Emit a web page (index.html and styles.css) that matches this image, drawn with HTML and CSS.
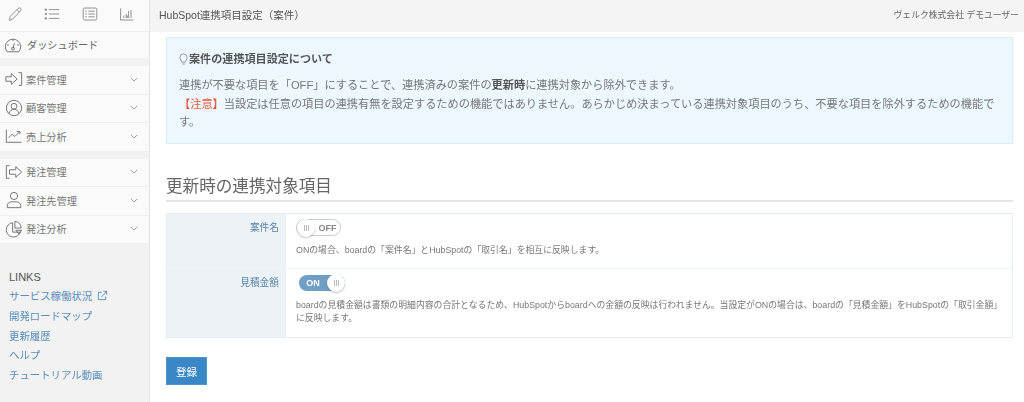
FILE: index.html
```html
<!DOCTYPE html>
<html lang="ja">
<head>
<meta charset="utf-8">
<title>HubSpot連携項目設定（案件）</title>
<link rel="stylesheet" href="styles.css">
</head>
<body>
<div class="app">
  <aside class="sidebar">
    <div class="tools">
      <svg class="tool" viewBox="0 0 20 20"><path d="M3 18l1-5L14 3a1.800 1.800 0 0 1 3 3L7 16.500z M12.500 4.500l3 3"/></svg>
      <svg class="tool" viewBox="0 0 20 20"><path d="M6 4.500h13M6 10h13M6 15.500h13"/><path class="dots" d="M1 4.500h2.500M1 10h2.500M1 15.500h2.500"/></svg>
      <svg class="tool" viewBox="0 0 20 20"><rect x="1.500" y="2.500" width="17" height="15" rx="2"/><path d="M8 6.500h8M8 10h8M8 13.500h8M4 6.500h2M4 10h2M4 13.500h2"/></svg>
      <svg class="tool" viewBox="0 0 20 20"><path d="M2 3v14.500h16M6 15v-3M9 15v-5M12 15V6M15 15V5M10.500 15v-3"/></svg>
    </div>
    <a class="dash">
      <svg class="ico ico-dash" viewBox="0 0 20 20"><path d="M3.500 17.500a8.500 8.500 0 1 1 13 0z"/><path d="M10 14l1.500-6M10 3.500v2M3.500 10h2M16.500 10h-2"/><circle cx="10" cy="14" r="1.700"/></svg>
      <span>ダッシュボード</span>
    </a>
    <ul class="group">
      <li class="nav"><svg class="ico" viewBox="0 0 20 20"><path d="M1 7.500h6V4l6.500 6L7 16v-3.500H1z"/><path d="M15 3h3.500v14H15"/></svg><span>案件管理</span><svg class="chev" viewBox="0 0 10 6"><path d="M1 1l4 4 4-4"/></svg></li>
      <li class="nav"><svg class="ico" viewBox="0 0 20 20"><circle cx="10" cy="10" r="8.500"/><circle cx="10" cy="8" r="3.200"/><path d="M4.500 16c1-3.500 3-4.500 5.500-4.500s4.500 1 5.500 4.500"/></svg><span>顧客管理</span><svg class="chev" viewBox="0 0 10 6"><path d="M1 1l4 4 4-4"/></svg></li>
      <li class="nav"><svg class="ico" viewBox="0 0 20 20"><path d="M1.500 3v14h17"/><path d="M4 12l4-4 3 2.500 5-5M13 5h3.500v3"/></svg><span>売上分析</span><svg class="chev" viewBox="0 0 10 6"><path d="M1 1l4 4 4-4"/></svg></li>
    </ul>
    <ul class="group group-b">
      <li class="nav"><svg class="ico" viewBox="0 0 20 20"><path d="M5 3H1.500v14H5"/><path d="M5 7.500h7V4l6.500 6-6.500 6v-3.500H5z"/></svg><span>発注管理</span><svg class="chev" viewBox="0 0 10 6"><path d="M1 1l4 4 4-4"/></svg></li>
      <li class="nav"><svg class="ico" viewBox="0 0 20 20"><circle cx="10" cy="5.500" r="4"/><path d="M2.500 18.500v-2c0-3 2.500-4.500 5-4.500h5c2.500 0 5 1.500 5 4.500v2z"/></svg><span>発注先管理</span><svg class="chev" viewBox="0 0 10 6"><path d="M1 1l4 4 4-4"/></svg></li>
      <li class="nav"><svg class="ico" viewBox="0 0 20 20"><path d="M8.500 3a8 8 0 1 0 8.500 10.500H8.500z"/><path d="M11 1.500a7.500 7.500 0 0 1 7 7.500h-7z"/><path d="M12 11.500h6.500l-3 4z"/></svg><span>発注分析</span><svg class="chev" viewBox="0 0 10 6"><path d="M1 1l4 4 4-4"/></svg></li>
    </ul>
    <div class="links">
      <div class="links-title">LINKS</div>
      <a>サービス稼働状況<svg class="ext" viewBox="0 0 12 12"><path d="M9.500 7v3.500h-8v-8H5"/><path d="M5 7.500L10.500 1.500M7 1.500h3.500V5"/></svg></a>
      <a>開発ロードマップ</a>
      <a>更新履歴</a>
      <a>ヘルプ</a>
      <a>チュートリアル動画</a>
    </div>
  </aside>
  <div class="main">
    <header class="topbar">
      <div class="page-title">HubSpot連携項目設定（案件）</div>
      <div class="user">ヴェルク株式会社 デモユーザー</div>
    </header>
    <main class="content">
      <section class="notice">
        <h3 class="notice-title"><svg class="bulb" viewBox="0 0 10 14"><path d="M3.200 10C3 8 1 7.500 1 4.800a4 4 0 0 1 8 0C9 7.500 7 8 6.800 10zM3.500 12h3"/></svg>案件の連携項目設定について</h3>
        <p>連携が不要な項目を「OFF」にすることで、連携済みの案件の<b>更新時</b>に連携対象から除外できます。</p>
        <p><span class="warn">【注意】</span>当設定は任意の項目の連携有無を設定するための機能ではありません。あらかじめ決まっている連携対象項目のうち、不要な項目を除外するための機能です。</p>
      </section>
      <h2 class="section-title">更新時の連携対象項目</h2>
      <div class="form-table">
        <div class="row row-one">
          <div class="label">案件名</div>
          <div class="field">
            <div class="switch off"><span class="knob"></span><span class="state">OFF</span></div>
            <p class="help">ONの場合、boardの「案件名」とHubSpotの「取引名」を相互に反映します。</p>
          </div>
        </div>
        <div class="row">
          <div class="label">見積金額</div>
          <div class="field">
            <div class="switch on"><span class="state">ON</span><span class="knob"></span></div>
            <p class="help">boardの見積金額は書類の明細内容の合計となるため、HubSpotからboardへの金額の反映は行われません。当設定がONの場合は、boardの「見積金額」をHubSpotの「取引金額」に反映します。</p>
          </div>
        </div>
      </div>
      <button class="submit">登録</button>
    </main>
  </div>
</div>
</body>
</html>
```

FILE: styles.css
```css
* { box-sizing: border-box; }
html, body { margin: 0; padding: 0; height: 100%; overflow: hidden; }
body {
  font-family: "Liberation Sans", "Noto Sans CJK JP", sans-serif;
  color: #555;
  background: #fff;
}
.app { display: flex; width: 1024px; height: 402px; filter: blur(.35px); }

.sidebar {
  width: 150px;
  flex: none;
  background: #f2f2f2;
  border-right: 1px solid #e4e4e4;
}
.tools {
  height: 32px;
  display: flex;
  align-items: center;
  justify-content: space-between;
  padding: 0 14px 4px 7px;
  background: #fafafa;
  border-bottom: 1px solid #eee;
}
.tool { width: 16px; height: 16px; fill: none; stroke: #777; stroke-width: 1; }
.tool .dots { stroke-width: 2; }
.dash {
  height: 26px;
  display: flex;
  align-items: center;
  gap: 5px;
  padding: 0 0 1px 4px;
  background: #fafafa;
  font-size: 10.200px;
  color: #666;
}
.ico { width: 18px; height: 18px; flex: none; fill: none; stroke: #777; stroke-width: 1.100; }
.group { list-style: none; margin: 8px 0 0; padding: 0; }
.group-b { margin-top: 7px; }
.nav {
  height: 28.500px;
  display: flex;
  align-items: center;
  gap: 3px;
  padding: 0 11px 1px 5px;
  background: #fafafa;
  border-bottom: 1px solid #efefef;
  font-size: 10.200px;
  color: #777;
}
.nav span { flex: 1; }
.chev { width: 8px; height: 5px; fill: none; stroke: #888; stroke-width: 1; }
.links { padding: 26px 0 0 9px; }
.links-title { font-size: 11px; line-height: 14px; color: #555; margin-bottom: 2px; }
.links a {
  display: flex;
  align-items: center;
  height: 19.700px;
  font-size: 10.400px;
  color: #5a8dba;
}
.ext { width: 11px; height: 11px; margin-left: 5px; fill: none; stroke: #5a8dba; stroke-width: 1; }

.main { flex: 1; min-width: 0; }
.topbar {
  height: 32px;
  display: flex;
  align-items: center;
  justify-content: space-between;
  padding: 0 5px 4px 9px;
  background: #f4f4f4;
}
.page-title { font-size: 10.500px; color: #555; }
.user { font-size: 8.800px; color: #666; }
.content { padding: 5px 11px 0 16px; }
.notice {
  height: 107px;
  padding: 13px 12px 0 12px;
  background: #ecf8fe;
  border: 1px solid #d5eff9;
}
.notice-title {
  display: flex;
  align-items: center;
  margin: 0 0 9px;
  font-size: 11.100px;
  line-height: 16px;
  font-weight: 700;
  color: #555;
}
.bulb { width: 9px; height: 13px; margin-right: 1px; fill: none; stroke: #888; stroke-width: .9; }
.notice p { margin: 0 0 1px; font-size: 11.200px; line-height: 18px; color: #777; }
.notice b { color: #555; }
.warn { color: #e8593c; }
.section-title {
  margin: 33px 0 11px;
  padding-bottom: 2px;
  height: 25px;
  font-size: 16.600px;
  line-height: 20px;
  font-weight: 400;
  color: #666;
  border-bottom: 2px solid #e5e5e5;
}
.form-table { border: 1px solid #e3eff8; border-top-color: #dfedf8; }
.row { display: flex; min-height: 68px; }
.row-one { min-height: 55px; border-bottom: 1px solid #eef4f9; }
.label {
  width: 119px;
  flex: none;
  padding: 7px 7px 0 0;
  background: #ecf2f6;
  text-align: right;
  font-size: 9.700px;
  line-height: 14px;
  color: #5a82a8;
}
.field { flex: 1; padding: 5px 9px 0 10px; }
.switch {
  width: 45px;
  height: 16px;
  border-radius: 9px;
  display: flex;
  align-items: center;
  font-size: 9px;
  font-weight: 700;
}
.switch.off { height: 17px; border: 1px solid #ccc; background: #fff; color: #888; }
.switch.on { background: #6f9fc4; color: #fff; margin: 1px 0 0 3px; width: 46px; }
.knob {
  width: 18px;
  height: 18px;
  margin: -2px 0;
  flex: none;
  border-radius: 50%;
  background: repeating-linear-gradient(90deg, #bbb 0 1px, #fff 1px 2px) center / 5px 6px no-repeat #fff;
  box-shadow: 0 1px 2px rgba(0,0,0,.25);
}
.state { flex: 1; text-align: center; }
.help { margin: 8px 0 0; font-size: 8.850px; line-height: 13px; color: #777; }
.submit {
  display: block;
  width: 41px;
  height: 28px;
  margin-top: 19px;
  padding: 0;
  border: 1px solid #4d93cc;
  background: #3a87c8;
  color: #fff;
  font: inherit;
  font-size: 10.500px;
}
```
